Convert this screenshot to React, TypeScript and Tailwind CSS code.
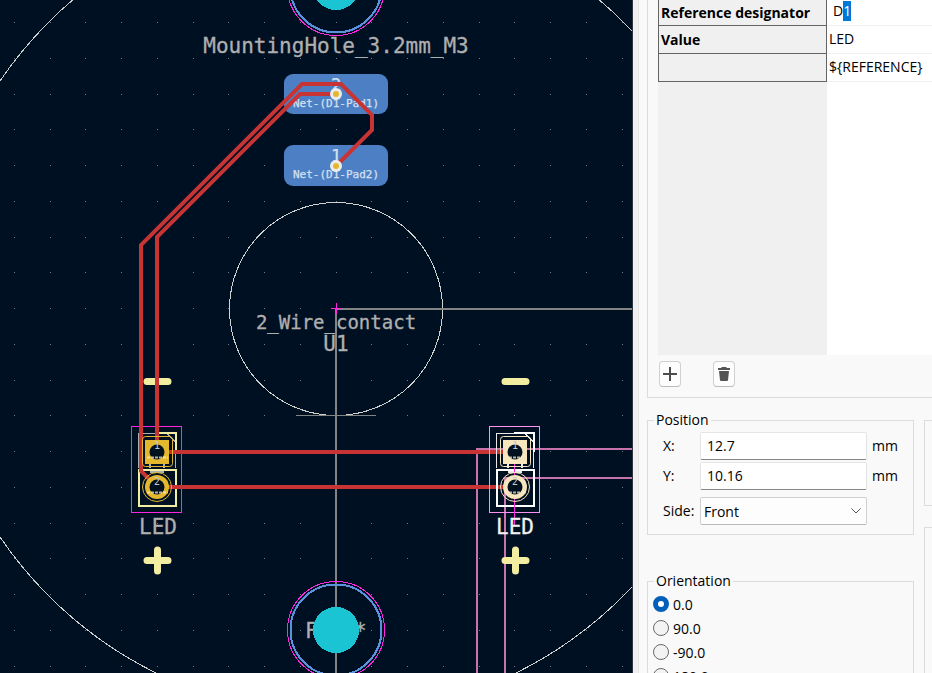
import { useEffect, useRef } from "react";

const GRID = 35.75;
const ORIGIN = { x: 336, y: 309 };

const gridDots: { x: number; y: number }[] = [];
for (let i = -9; i <= 40; i++) {
  for (let j = -8; j <= 30; j++) {
    gridDots.push({
      x: Math.floor(ORIGIN.x + i * GRID),
      y: Math.floor(ORIGIN.y + j * GRID - 0.5),
    });
  }
}

const MONO = "font-['DejaVu_Sans_Mono',monospace]";

function ContactPad({ y, height, number, net }: { y: number; height: number; number: string; net: string }) {
  return (
    <g>
      <rect x={284} y={y} width={104} height={height} rx={9} fill="#4d7fc4" />
      <g fill="#d5e0f1" stroke="#d5e0f1" strokeWidth={0.25} textAnchor="middle">
        <text x={336} y={y + 17} className={`${MONO} text-[17px]`}>
          {number}
        </text>
        <text x={336} y={y + 33} className={`${MONO} text-[11px]`}>
          {net}
        </text>
      </g>
    </g>
  );
}

function Via({ y }: { y: number }) {
  return (
    <g>
      <circle cx={336} cy={y} r={6} fill="#ececec" />
      <circle cx={336} cy={y} r={3} fill="#e3b72e" />
    </g>
  );
}

function MountingHole({ cy }: { cy: number }) {
  return (
    <g shapeRendering="crispEdges">
      <circle cx={336} cy={cy} r={48.5} fill="none" stroke="#ff26e2" />
      <circle cx={336} cy={cy} r={45.5} fill="none" stroke="#5a93dd" strokeWidth={2} />
      <circle cx={336} cy={cy} r={23} fill="#1ac4d2" />
    </g>
  );
}

type HeaderColors = { courtyard: string; silk: string; fab: string; copper: string };

function HeaderOutline({ cx, colors }: { cx: number; colors: HeaderColors }) {
  return (
    <g fill="none" transform={`translate(${cx} 452)`} shapeRendering="crispEdges">
      <rect x={-25.5} y={-25.5} width={50} height={86} stroke={colors.courtyard} />
      <path d="M-18.5 16V-18.5H10L18.5 -10V16" stroke={colors.fab} />
      <path d="M-1 -19H19V0" stroke={colors.silk} strokeWidth={2} />
      <rect x={-18} y={18} width={37} height={36} stroke={colors.silk} strokeWidth={2} />
      <path d="M-7 12v4M7 12v4M-7 20h14" stroke={colors.fab} strokeWidth={2} />
    </g>
  );
}

function HeaderPads({ cx, colors }: { cx: number; colors: HeaderColors }) {
  return (
    <g transform={`translate(${cx} 452)`}>
      <rect x={-12} y={-12} width={24} height={24} fill={colors.copper} />
      <rect x={-14.5} y={-15.5} width={30} height={30} rx={3} fill="none" stroke={colors.copper} />
      <circle cy={35} r={12} fill={colors.copper} />
      <circle cy={35} r={14.5} fill="none" stroke={colors.copper} />
      <circle r={7.5} fill="#00101f" />
      <circle cy={35} r={7.5} fill="#00101f" />
      <path d="M-10 5.5H11M-10 40.5H11" stroke="#f4ead0" strokeOpacity={0.75} strokeWidth={2} strokeDasharray="3 1" />
      <g fill="#c3c8cd" textAnchor="middle">
        <text x={0} y={-3} className={`${MONO} text-[10px]`}>
          1
        </text>
        <text x={0} y={33} className={`${MONO} text-[10px]`}>
          2
        </text>
      </g>
    </g>
  );
}

function Polarity({ cx }: { cx: number }) {
  return (
    <path
      d={`M${cx - 10.5} 381.5h21M${cx - 10.5} 560.5h21M${cx} 550v21`}
      stroke="#f2eda1"
      strokeWidth={7}
      strokeLinecap="round"
    />
  );
}

const normal: HeaderColors = { courtyard: "#ff26e2", silk: "#f2eda1", fab: "#afafaf", copper: "#e3b72e" };
const selected: HeaderColors = { courtyard: "#ff91f0", silk: "#ffffff", fab: "#e8e8e8", copper: "#f7e6bd" };

function Board() {
  return (
    <svg className="block h-full w-full" role="img" aria-label="PCB layout">
      <g fill="#77797c" shapeRendering="crispEdges">
        {gridDots.map((d) => (
          <rect key={`${d.x}-${d.y}`} x={d.x} y={d.y} width={1} height={1} />
        ))}
      </g>

      <g fill="none" stroke="#d0d2cd" shapeRendering="crispEdges">
        <circle cx={336} cy={309} r={406} />
        <circle cx={336} cy={309} r={106.5} />
      </g>

      <g fill="#afafaf" stroke="#afafaf" strokeWidth={0.3}>
        <text x={336} y={53} textAnchor="middle" className={`${MONO} text-[21px]`}>
          MountingHole_3.2mm_M3
        </text>
        <text x={336} y={329} textAnchor="middle" className={`${MONO} text-[19px]`}>
          2_Wire_contact
        </text>
        <text x={336} y={351} textAnchor="middle" className={`${MONO} text-[21px]`}>
          U1
        </text>
        <text x={305} y={638} className={`${MONO} text-[21px]`}>
          F
        </text>
        <text x={354} y={638} className={`${MONO} text-[21px]`}>
          *
        </text>
      </g>

      <g stroke="#848484" fill="none" shapeRendering="crispEdges">
        <path d="M336 309H4000M336 309V4000" strokeWidth={2} />
        <path d="M296 415.5H376" />
      </g>
      <path d="M331 308.5h11M336.5 303v11" stroke="#ff26e2" shapeRendering="crispEdges" />

      <MountingHole cy={-13} />
      <MountingHole cy={630} />

      <ContactPad y={74} height={40} number="2" net="Net-(D1-Pad1)" />
      <ContactPad y={145} height={41} number="1" net="Net-(D1-Pad2)" />

      <g fill="none" stroke="#c872ae" strokeWidth={2} shapeRendering="crispEdges">
        <path d="M4000 449H477V4000" />
        <path d="M4000 478H505V4000" />
      </g>

      <Polarity cx={157.5} />
      <Polarity cx={515.5} />
      <HeaderOutline cx={157} colors={normal} />

      <g fill="none" stroke="#c83434" strokeWidth={4}>
        <path d="M157 487L141 471V245L302 84H341L372 115V130L336 166" />
        <path d="M157 452V237L300 94H336" />
        <path d="M157 452H515M157 487H515" />
      </g>

      <HeaderOutline cx={515} colors={selected} />
      <path d="M514.5 464V526" stroke="#ff26e2" shapeRendering="crispEdges" />
      <HeaderPads cx={157} colors={normal} />
      <HeaderPads cx={515} colors={selected} />
      <Via y={94} />
      <Via y={166} />

      <g textAnchor="middle" strokeWidth={0.3}>
        <text x={158} y={534} fill="#afafaf" stroke="#afafaf" className={`${MONO} text-[21px]`}>
          LED
        </text>
        <text x={515} y={534} fill="#f0f0f0" stroke="#f0f0f0" className={`${MONO} text-[21px]`}>
          LED
        </text>
      </g>
    </svg>
  );
}

const labelCell = "border-x border-b border-[#646464] bg-[#f0f0f0] p-0 px-0.5 text-left font-bold";
const valueCell = "border-b border-[#f0f0f0] bg-white p-0 pb-0.5 pl-0.5";

function FieldsTable() {
  const designator = useRef<HTMLInputElement>(null);
  useEffect(() => {
    designator.current?.focus();
    designator.current?.setSelectionRange(1, 2);
  }, []);

  return (
    <div className="h-[355px] bg-[linear-gradient(to_right,#f0f0f0_169px,#ffffff_169px)]">
      <table className="w-full table-fixed border-separate border-spacing-0">
        <colgroup>
          <col className="w-[169px]" />
          <col />
        </colgroup>
        <tbody>
          <tr className="h-[26px]">
            <th scope="row" className={labelCell}>Reference designator</th>
            <td className="border-b border-[#f0f0f0] bg-white p-0 pb-1 pl-1.5">
              <input
                ref={designator}
                aria-label="Reference designator"
                defaultValue="D1"
                className="block h-5 w-full bg-transparent caret-transparent outline-none selection:bg-[#0078d7] selection:text-white"
              />
            </td>
          </tr>
          <tr className="h-7">
            <th scope="row" className={labelCell}>Value</th>
            <td className={valueCell}>LED</td>
          </tr>
          <tr className="h-7">
            <th scope="row" className={labelCell} aria-label="Text item"></th>
            <td className={valueCell}>{"${REFERENCE}"}</td>
          </tr>
        </tbody>
      </table>
    </div>
  );
}

function ToolButton({ label, children }: { label: string; children: React.ReactNode }) {
  return (
    <button
      type="button"
      aria-label={label}
      className="flex h-[26px] w-[22px] items-center justify-center rounded border border-[#d0d0d0] border-b-[#bababa] bg-[#fdfdfd]"
    >
      {children}
    </button>
  );
}

function Coordinate({ id, label, value }: { id: string; label: string; value: string }) {
  return (
    <div className="flex h-7 items-center">
      <label htmlFor={id} className="w-[37px]">{label}</label>
      <input
        id={id}
        defaultValue={value}
        className="h-7 w-[167px] rounded-xs border border-[#e5e5e5] border-b-[#868686] bg-white px-1.5 pb-0.5 outline-none"
      />
      <span className="pl-[5px]">mm</span>
    </div>
  );
}

const angles = ["0.0", "90.0", "-90.0", "180.0"];

function Properties() {
  return (
    <aside className="flex w-[299px] shrink-0 overflow-hidden bg-[#f9f9f9] font-['Open_Sans','Noto_Sans',sans-serif] text-sm leading-5 text-black">
      <div className="w-1.5 shrink-0 border-r border-[#e6e6e6] bg-[#f0f0f0]" />
      <div className="min-w-0 flex-1 pl-2">
        <section className="h-[398px] border-b border-l border-[#dcdcdc] pl-2.5">
          <FieldsTable />
          <div className="flex gap-8 px-px pt-1.5">
            <ToolButton label="Add field">
              <svg viewBox="0 0 14 14" className="size-3.5 shrink-0" stroke="#4c4c4c" strokeWidth="2">
                <path d="M7 0v14M0 7h14" />
              </svg>
            </ToolButton>
            <ToolButton label="Delete field">
              <svg viewBox="0 0 14 16" className="h-4 w-3.5 shrink-0" fill="#545454">
                <path d="M1 2h3l1-1h4l1 1h3v2H1zM2 5h10l-1 9q0 1-1 1H4q-1 0-1-1z" />
              </svg>
            </ToolButton>
          </div>
        </section>

        <div className="mt-3 grid grid-cols-[267px_1fr] gap-x-2.5">
          <div>
            <fieldset className="border border-[#dcdcdc] pr-2 pb-[9px] pl-[15px]">
              <legend className="-ml-[9px] px-0.5">Position</legend>
              <div className="flex flex-col gap-0.5 pt-0.5">
                <Coordinate id="pos-x" label="X:" value="12.7" />
                <Coordinate id="pos-y" label="Y:" value="10.16" />
              </div>
              <div className="mt-[7px] flex h-7 items-center">
                <label htmlFor="side" className="w-[37px]">Side:</label>
                <div className="relative">
                  <select
                    id="side"
                    defaultValue="Front"
                    className="block h-7 w-[167px] appearance-none rounded-xs border border-[#d0d0d0] border-b-[#bababa] bg-[#fdfdfd] px-[3px] pt-0.5 outline-none"
                  >
                    <option>Front</option>
                    <option>Back</option>
                  </select>
                  <svg
                    viewBox="0 0 10 6"
                    className="pointer-events-none absolute top-[11px] right-1.5 h-1.5 w-2.5"
                    fill="none"
                    stroke="#555555"
                  >
                    <path d="M0.5 0.5L5 5L9.5 0.5" />
                  </svg>
                </div>
              </div>
            </fieldset>
            <fieldset className="mt-9 border border-[#dcdcdc] pb-2 pl-[5px]">
              <legend className="ml-px px-0.5">Orientation</legend>
              <div className="pt-px">
                {angles.map((angle, i) => (
                  <label key={angle} className="flex h-6 items-center gap-1">
                    <input
                      type="radio"
                      name="orientation"
                      defaultChecked={i === 0}
                      className="size-4 appearance-none rounded-full border border-[#6a6a6a] bg-[#f3f3f3] checked:border-5 checked:border-[#005fb8] checked:bg-white"
                    />
                    <span className="pt-0.5">{angle}</span>
                  </label>
                ))}
              </div>
            </fieldset>
          </div>
          <div className="pt-2.5">
            <div className="h-[86px] border-y border-l border-[#dcdcdc]" />
            <div className="mt-[21px] h-56 border-y border-l border-[#dcdcdc]" />
          </div>
        </div>
      </div>
    </aside>
  );
}

export default function App() {
  return (
    <div className="flex h-screen overflow-hidden bg-[#f9f9f9]">
      <main className="min-w-0 flex-1 border-r border-[#2f3542] bg-[#001023]">
        <Board />
      </main>
      <Properties />
    </div>
  );
}
